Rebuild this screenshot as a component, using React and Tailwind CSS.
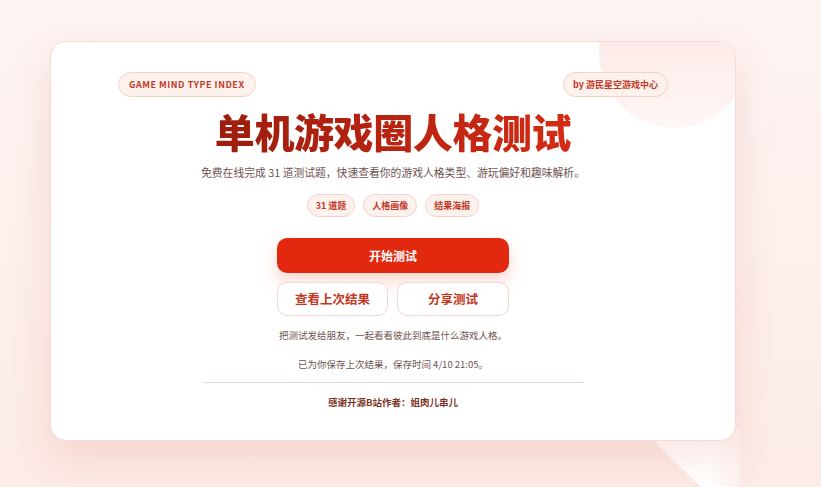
const cjk = { fontFamily: '"Noto Sans CJK SC", "Noto Sans", sans-serif' };

function Pill({ children, className = "" }) {
  return (
    <span
      className={`inline-flex items-center rounded-full border border-[#f3d2ca] bg-[#fdf1ee] text-[#c23a26] font-bold ${className}`}
    >
      {children}
    </span>
  );
}

export default function App() {
  return (
    <div
      className="relative h-[487px] w-[821px] overflow-hidden bg-gradient-to-b from-[#fdf4f2] to-[#fcebe7] pl-[50px] pt-[41px]"
      style={cjk}
    >
      {/* white wedge below the card */}
      <div className="absolute left-[640px] top-[428px] h-[60px] w-[100px] bg-gradient-to-r from-white via-white via-70% to-[#fdf2ef] [clip-path:polygon(0_0,100%_0,100%_100%,62%_100%)]" />

      <div className="relative h-[400px] w-[686px] overflow-hidden rounded-[16px] border border-[#f4dcd6] bg-white shadow-[0_18px_40px_rgba(214,96,74,0.16)]">
        <div className="absolute right-[-14px] top-[-64px] h-[150px] w-[150px] rounded-full bg-gradient-to-b from-[#fbe2de] to-[#fff7f6]" />

        <div className="relative flex flex-col items-center px-[67px] pt-[30px]">
          <div className="flex w-full items-center justify-between">
            <Pill className="h-[25px] px-[10px] text-[9px] tracking-[0.06em]">
              GAME MIND TYPE INDEX
            </Pill>
            <Pill className="h-[25px] rounded-[9px] px-[9px] text-[9px]">
              by 游民星空游戏中心
            </Pill>
          </div>

          <h1 className="mt-[10px] bg-gradient-to-r from-[#9c1d0e] to-[#d52b14] bg-clip-text text-[40px] font-black leading-[48px] tracking-[-0.01em] text-transparent">
            单机游戏圈人格测试
          </h1>

          <p className="mt-[9px] text-[10.8px] leading-[16px] text-[#6e5451]">
            免费在线完成 31 道测试题，快速查看你的游戏人格类型、游玩偏好和趣味解析。
          </p>

          <div className="mt-[14px] flex gap-[8px]">
            <Pill className="h-[23px] px-[8px] text-[9px]">31 道题</Pill>
            <Pill className="h-[23px] px-[8px] text-[9px]">人格画像</Pill>
            <Pill className="h-[23px] px-[8px] text-[9px]">结果海报</Pill>
          </div>

          <button className="mt-[21px] h-[35px] w-[232px] rounded-[10px] bg-[#e2290f] text-[12px] font-bold text-white shadow-[0_8px_18px_rgba(226,60,30,0.22)]">
            开始测试
          </button>

          <div className="mt-[9px] flex gap-[9px]">
            <button className="h-[34px] w-[111px] rounded-[10px] border border-[#f1d8d2] bg-white text-[12.5px] font-bold text-[#c2381f]">
              查看上次结果
            </button>
            <button className="h-[34px] w-[112px] rounded-[10px] border border-[#f1d8d2] bg-white text-[12.5px] font-bold text-[#c2381f]">
              分享测试
            </button>
          </div>

          <p className="mt-[12px] text-[9.5px] leading-[14px] text-[#6e5451]">
            把测试发给朋友，一起看看彼此到底是什么游戏人格。
          </p>
          <p className="mt-[15px] text-[9.5px] leading-[14px] text-[#6e5451]">
            已为你保存上次结果，保存时间 4/10 21:05。
          </p>

          <div className="mt-[11px] h-px w-[380px] bg-[#ecd9d4]" />

          <p className="mt-[12px] text-[9.5px] font-bold leading-[14px] text-[#7a3526]">
            感谢开源B站作者：姐肉儿串儿
          </p>
        </div>
      </div>
    </div>
  );
}
